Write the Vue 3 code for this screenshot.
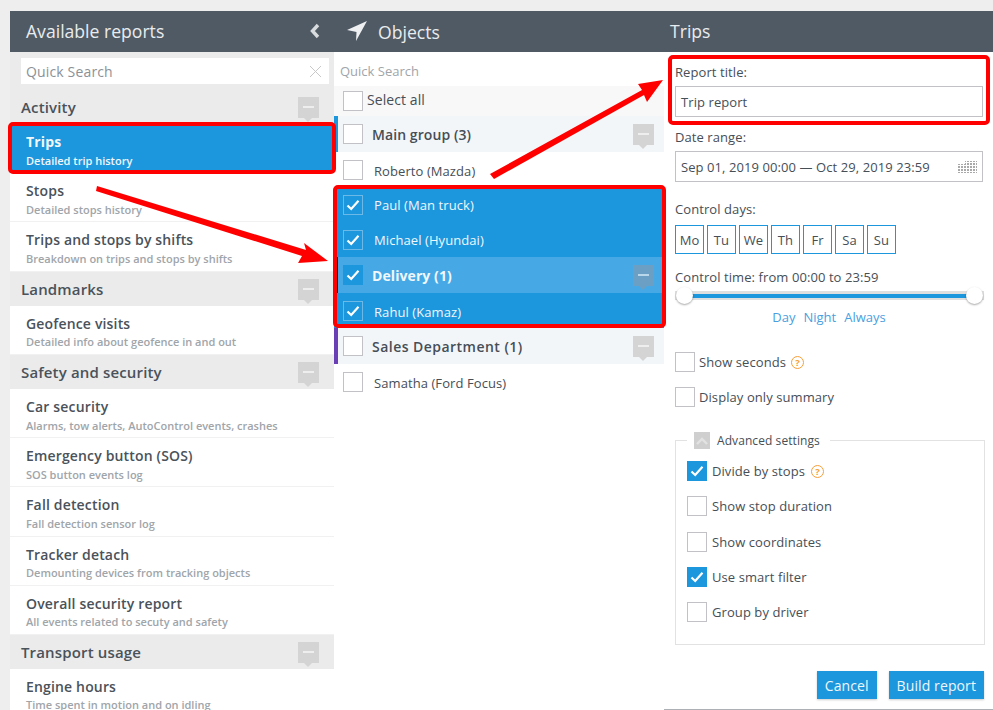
<script setup>
const groups = [
  { title: 'Activity', items: [
    { t: 'Trips', s: 'Detailed trip history', active: true },
    { t: 'Stops', s: 'Detailed stops history' },
    { t: 'Trips and stops by shifts', s: 'Breakdown on trips and stops by shifts', tall: true }
  ] },
  { title: 'Landmarks', items: [
    { t: 'Geofence visits', s: 'Detailed info about geofence in and out', tight: true }
  ] },
  { title: 'Safety and security', items: [
    { t: 'Car security', s: 'Alarms, tow alerts, AutoControl events, crashes' },
    { t: 'Emergency button (SOS)', s: 'SOS button events log' },
    { t: 'Fall detection', s: 'Fall detection sensor log', tall: true },
    { t: 'Tracker detach', s: 'Demounting devices from tracking objects', tight: true },
    { t: 'Overall security report', s: 'All events related to secuty and safety', tight: true }
  ] },
  { title: 'Transport usage', items: [
    { t: 'Engine hours', s: 'Time spent in motion and on idling', tight: true }
  ] }
]
const objects = [
  { kind: 'group', label: 'Main group (3)', bar: '#1c96dc' },
  { kind: 'obj', label: 'Roberto (Mazda)', low: true },
  { kind: 'obj', label: 'Paul (Man truck)', on: true },
  { kind: 'obj', label: 'Michael (Hyundai)', on: true },
  { kind: 'group', label: 'Delivery (1)', bar: '#111', on: true },
  { kind: 'obj', label: 'Rahul (Kamaz)', on: true, low: true },
  { kind: 'group', label: 'Sales Department (1)', bar: '#6a3fb5', wide: true },
  { kind: 'obj', label: 'Samatha (Ford Focus)', low: true }
]
const days = ['Mo', 'Tu', 'We', 'Th', 'Fr', 'Sa', 'Su']
const advanced = [
  { label: 'Divide by stops', on: true, help: true },
  { label: 'Show stop duration' },
  { label: 'Show coordinates' },
  { label: 'Use smart filter', on: true },
  { label: 'Group by driver' }
]
</script>

<template>
  <div class="page">
    <section class="col left">
      <header class="head">
        <span>Available reports</span>
        <svg class="back" width="12" height="16" viewBox="0 0 12 16"><path d="M9 2 L3.5 8 L9 14" fill="none" stroke="#d8dcdf" stroke-width="3.4"/></svg>
      </header>
      <div class="searchbar">
        <div class="searchbox">
          <span>Quick Search</span>
          <svg width="13" height="13" viewBox="0 0 13 13"><path d="M1 1 L12 12 M12 1 L1 12" stroke="#c8c8c8" stroke-width="1"/></svg>
        </div>
      </div>
      <template v-for="g in groups" :key="g.title">
        <div class="grouphead">
          <span>{{ g.title }}</span>
          <span class="tag"><i></i></span>
        </div>
        <div v-for="it in g.items" :key="it.t" class="item" :class="{ active: it.active, tall: it.tall, tight: it.tight }">
          <div class="ititle">{{ it.t }}</div>
          <div class="isub">{{ it.s }}</div>
        </div>
      </template>
    </section>

    <section class="col mid">
      <header class="head objhead">
        <svg width="22" height="22" viewBox="0 0 22 22"><path d="M1 9 L21 0 L10 20 L10.5 11 Z" fill="#eef0f2"/></svg>
        <span>Objects</span>
      </header>
      <div class="objsearch">Quick Search</div>
      <div class="selectall">
        <span class="chk"></span>
        <span class="salabel">Select all</span>
      </div>
      <div v-for="o in objects" :key="o.label" class="orow" :class="[o.kind, { on: o.on }]">
        <span v-if="o.kind === 'group'" class="bar" :style="{ background: o.bar }"></span>
        <span class="chk" :class="{ ticked: o.on }">
          <svg v-if="o.on" width="14" height="12" viewBox="0 0 14 12"><path d="M1.5 6.5 L5.2 10 L12.5 1.8" fill="none" stroke="#fff" stroke-width="2.2"/></svg>
        </span>
        <span class="olabel" :class="{ low: o.low, wide: o.wide }">{{ o.label }}</span>
        <span v-if="o.kind === 'group'" class="tag"><i></i></span>
      </div>
    </section>

    <section class="col right">
      <header class="head trips"><span>Trips</span></header>
      <div class="form">
        <label class="lab l1">Report title:</label>
        <div class="field">Trip report</div>
        <label class="lab l2">Date range:</label>
        <div class="field datefield">
          <span>Sep 01, 2019 00:00 — Oct 29, 2019 23:59</span>
          <svg width="19" height="13" viewBox="0 0 19 13">
            <pattern id="dots" width="3" height="3" patternUnits="userSpaceOnUse"><rect width="2" height="2" fill="#a9a9a9"/></pattern>
            <path d="M0 4 H7 V1 H19 V13 H0 Z" fill="url(#dots)"/>
          </svg>
        </div>
        <label class="lab l3">Control days:</label>
        <div class="days"><span v-for="d in days" :key="d" class="day">{{ d }}</span></div>
        <label class="lab l4">Control time: from 00:00 to 23:59</label>
        <div class="slider"><div class="fill"></div><span class="knob k1"></span><span class="knob k2"></span></div>
        <div class="links"><span>Day</span><span>Night</span><span>Always</span></div>
        <div class="check first">
          <span class="chk"></span><span>Show seconds</span>
          <span class="help">?</span>
        </div>
        <div class="check second"><span class="chk"></span><span>Display only summary</span></div>
        <fieldset class="adv">
          <legend>
            <span class="up"><svg width="12" height="8" viewBox="0 0 12 8"><path d="M1 7 L6 2 L11 7" fill="none" stroke="#e2e2e2" stroke-width="2.4"/></svg></span>
            <span>Advanced settings</span>
          </legend>
          <div v-for="a in advanced" :key="a.label" class="check advrow">
            <span class="chk" :class="{ solid: a.on }">
              <svg v-if="a.on" width="14" height="12" viewBox="0 0 14 12"><path d="M1.5 6.5 L5.2 10 L12.5 1.8" fill="none" stroke="#fff" stroke-width="2.2"/></svg>
            </span>
            <span>{{ a.label }}</span>
            <span v-if="a.help" class="help">?</span>
          </div>
        </fieldset>
        <div class="actions">
          <button class="btn">Cancel</button>
          <button class="btn">Build report</button>
        </div>
      </div>
    </section>

    <svg class="marks" width="993" height="710" viewBox="0 0 993 710">
      <g fill="none" stroke="#f00" stroke-width="4">
        <rect x="10" y="124" width="324" height="48" rx="3"/>
        <rect x="335" y="187" width="329" height="139" rx="3"/>
        <rect x="670" y="57" width="318" height="66" rx="3"/>
      </g>
      <g fill="#f00">
        <path d="M97 186 L306 250 L304 243 L328 261 L298 263 L302 256 L96 191 Z"/>
        <path d="M490 174 L642 90 L638 84 L663 80 L647 102 L644 95 L494 179 Z"/>
      </g>
    </svg>
  </div>
</template>

<style>
html, body { margin: 0; padding: 0; }
</style>

<style scoped>
.page {
  position: relative;
  display: flex;
  box-sizing: border-box;
  width: 993px;
  height: 710px;
  padding: 11px 0 0 10px;
  overflow: hidden;
  background: #eeeeee;
  font-family: "Open Sans", sans-serif;
  color: #464e56;
}
.col { box-sizing: border-box; background: #fff; height: 699px; overflow: hidden; }
.left { width: 324px; }
.mid { width: 330px; }
.right { width: 329px; border-bottom: 1px solid #adb0b4; }
.head {
  display: flex;
  align-items: center;
  justify-content: space-between;
  box-sizing: border-box;
  height: 41px;
  padding: 0 13px 2px 16px;
  background: #505a64;
  color: #e9ecee;
  font-size: 17.6px;
}
.objhead { justify-content: flex-start; gap: 10px; padding: 0 0 0 12px; }
.trips { padding-left: 6px; }
.searchbar { height: 38px; box-sizing: border-box; padding: 6px 5px 0 11px; background: #ebebeb; }
.searchbox {
  display: flex;
  align-items: center;
  justify-content: space-between;
  height: 26px;
  padding: 0 7px 0 5px;
  background: #fff;
  color: #8b9197;
  font-size: 14px;
  letter-spacing: .15px;
}
.grouphead {
  position: relative;
  display: flex;
  align-items: center;
  height: 34px;
  padding-left: 11px;
  background: #ebebeb;
  color: #4a525a;
  font-size: 15px;
  font-weight: 600;
  letter-spacing: .15px;
}
.tag {
  position: absolute;
  right: 15px;
  top: 7px;
  width: 21px;
  height: 21px;
  background: #d4d4d4;
}
.tag::after {
  content: "";
  position: absolute;
  left: 6px;
  top: 21px;
  border: 4px solid transparent;
  border-top-color: #d4d4d4;
  border-bottom: 0;
}
.tag i {
  position: absolute;
  left: 5px;
  right: 5px;
  top: 9px;
  height: 2px;
  background: #eeeeee;
}
.item {
  box-sizing: border-box;
  height: 49px;
  padding: 9px 0 0 16px;
  border-bottom: 1px solid #f1f1f1;
}
.item.tall { height: 50px; }
.ititle { font-size: 14px; line-height: 18px; font-weight: 600; color: #4a525a; letter-spacing: .16px; }
.isub { margin-top: 2px; font-size: 11px; line-height: 15px; font-weight: 600; color: #a0a5aa; }
.item.tight .isub { margin-top: 1px; }
.item.active { background: #1c96dc; border-bottom: 0; }
.item.active .ititle { color: #f1f7fb; font-weight: 700; }
.item.active .isub { color: #f1f7fb; }
.objsearch {
  box-sizing: border-box;
  height: 34px;
  padding: 10px 0 0 6px;
  font-size: 13px;
  color: #a0a5aa;
}
.selectall {
  display: flex;
  align-items: center;
  gap: 4px;
  height: 30px;
  padding-left: 9px;
  background: #f8f8f8;
  font-size: 14px;
}
.salabel { padding-bottom: 3px; letter-spacing: .08px; }
.chk {
  display: flex;
  align-items: center;
  justify-content: center;
  flex: none;
  box-sizing: border-box;
  width: 20px;
  height: 20px;
  border: 1px solid #c2c2c6;
  background: #fff;
}
.orow {
  position: relative;
  display: flex;
  align-items: center;
  height: 35px;
  padding-left: 9px;
  font-size: 13px;
}
.olabel { margin-left: 11px; letter-spacing: .08px; }
.olabel.low { padding-top: 2px; }
.olabel.wide { letter-spacing: .47px; }
.orow.group { height: 36px; background: #f3f6f9; font-size: 14px; font-weight: 600; }
.orow.group .olabel { margin-left: 9px; }
.bar { position: absolute; left: 0; top: 0; bottom: 0; width: 4px; }
.orow .tag { top: 8px; right: 10px; }
.orow.on { background: #1c96dc; color: #f1f7fb; }
.orow.group.on { background: #46a9e6; font-weight: 700; }
.chk.ticked { background: transparent; border-color: #6cb9e8; }
.group.on .chk.ticked { background: #1c96dc; border-color: #1c96dc; }
.group.on .tag { background: #6b9fc3; }
.group.on .tag::after { border-top-color: #6b9fc3; }
.group.on .tag i { background: #b9d7ea; }
.form { padding: 0 10px 0 11px; letter-spacing: .08px; }
.lab { display: block; font-size: 13px; line-height: 18px; }
.l1 { margin-top: 11px; }
.l2 { margin-top: 11px; }
.l3 { margin-top: 18px; }
.l4 { margin-top: 14px; }
.field {
  display: flex;
  align-items: center;
  justify-content: space-between;
  box-sizing: border-box;
  height: 31px;
  margin-top: 5px;
  padding: 0 5px;
  border: 1px solid #c2c2c6;
  font-size: 13px;
}
.days { display: flex; gap: 3px; margin-top: 7px; }
.day {
  display: flex;
  align-items: center;
  justify-content: center;
  box-sizing: border-box;
  width: 29px;
  height: 29px;
  border: 1px solid #1c96dc;
  font-size: 13px;
}
.slider {
  position: relative;
  height: 9px;
  width: 309px;
  margin-top: 5px;
  background: #dfdfdf;
}
.fill { position: absolute; left: 8px; right: 8px; top: 3px; height: 4px; background: #1c96dc; }
.knob {
  position: absolute;
  top: -4px;
  width: 17px;
  height: 17px;
  border-radius: 50%;
  background: #fff;
  box-shadow: 0 1px 2px rgba(0, 0, 0, .35);
}
.k1 { left: 1px; }
.k2 { right: 1px; }
.links {
  display: flex;
  justify-content: center;
  gap: 8px;
  margin-top: 8px;
  color: #4a9fe0;
  font-size: 13px;
  line-height: 18px;
  letter-spacing: 0;
}
.check { display: flex; align-items: center; gap: 4px; font-size: 13px; height: 20px; }
.first { margin-top: 26px; }
.second { margin-top: 15px; }
.help {
  display: inline-flex;
  align-items: center;
  justify-content: center;
  box-sizing: border-box;
  width: 13px;
  height: 13px;
  margin-left: 1px;
  border: 1.5px solid #f5a03c;
  border-radius: 50%;
  color: #f5a03c;
  font-size: 9.5px;
  font-weight: 700;
}
.adv {
  box-sizing: border-box;
  height: 213px;
  width: 310px;
  margin: 25px 0 0;
  padding: 0 11px;
  border: 1px solid #e2e2e2;
  min-width: 0;
}
.adv legend {
  display: flex;
  align-items: center;
  gap: 7px;
  margin-left: 0;
  padding: 0 10px 0 7px;
  font-size: 12px;
  line-height: 17px;
}
.up {
  display: flex;
  align-items: center;
  justify-content: center;
  width: 16px;
  height: 17px;
  background: #cfcfcf;
}
.advrow { margin-bottom: 15.3px; gap: 5px; }
.advrow:first-of-type { margin-top: 12px; }
.chk.solid { background: #1c96dc; border-color: #1c96dc; }
.actions { display: flex; justify-content: flex-end; gap: 12px; margin-top: 26px; width: 309px; }
.btn {
  box-sizing: border-box;
  height: 28px;
  padding: 0 8px;
  border: 0;
  background: #1c96dc;
  color: #eef6fb;
  font: 14px "Open Sans", sans-serif;
  letter-spacing: .1px;
  box-shadow: 0 1px 2px rgba(0, 0, 0, .2);
}
.marks { position: absolute; left: 0; top: 0; pointer-events: none; }
</style>
